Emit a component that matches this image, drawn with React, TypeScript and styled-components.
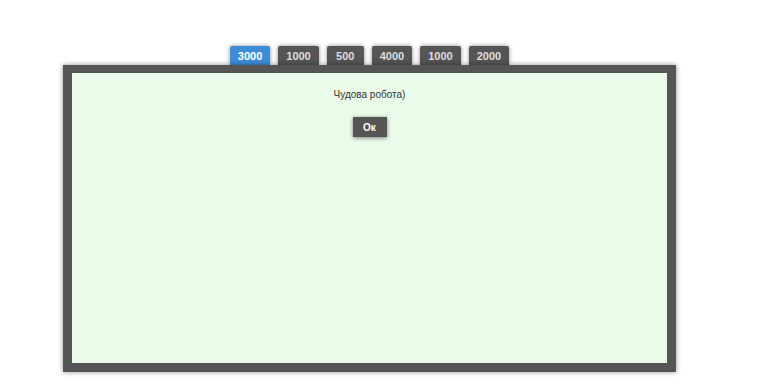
import React, { useState } from 'react';
import styled, { createGlobalStyle } from 'styled-components';

const GlobalStyle = createGlobalStyle`
  html, body {
    margin: 0;
    padding: 0;
    background: #fff;
    font-family: "Liberation Sans", Arial, sans-serif;
  }
`

const Page = styled.div`
  width: 768px;
  height: 383px;
  padding-top: 46px;
  box-sizing: border-box;
`

const Board = styled.div`
  width: 613px;
  margin-left: 63px;
  display: flex;
  flex-direction: column;
  align-items: center;
`

const TabRow = styled.div`
  display: flex;
  gap: 8px;
  position: relative;
  z-index: 0;
`

const Tab = styled.button<{ active: boolean }>`
  height: 19px;
  padding: 0 8px;
  min-width: 37px;
  border: none;
  border-radius: 2px 2px 0 0;
  font: bold 11px "Liberation Sans", Arial, sans-serif;
  color: ${props => props.active ? '#fff' : '#dedede'};
  background: ${props => props.active ? '#3d8ed9' : '#555'};
  box-shadow: 0 0 4px rgba(0, 0, 0, 0.45);
  cursor: pointer;
`

const Panel = styled.div`
  position: relative;
  z-index: 1;
  width: 613px;
  height: 307px;
  box-sizing: border-box;
  border: 9px solid #555;
  border-top-width: 8px;
  background: #ebfbe9;
  box-shadow: 0 0 5px rgba(0, 0, 0, 0.45);
  display: flex;
  flex-direction: column;
  align-items: center;
  padding-top: 15px;
`

const Message = styled.p`
  margin: 0;
  font: 10px/13px "Liberation Sans", Arial, sans-serif;
  color: #333;
`

const OkButton = styled.button`
  margin-top: 16px;
  width: 34px;
  height: 20px;
  padding: 0;
  border: none;
  background: #555;
  color: #fff;
  font: bold 10px "Liberation Sans", Arial, sans-serif;
  box-shadow: 0 1px 4px rgba(0, 0, 0, 0.5);
  cursor: pointer;
`

const amounts = [3000, 1000, 500, 4000, 1000, 2000];

export default function App() {
  const [active, setActive] = useState(0);

  return (
    <Page>
      <GlobalStyle />
      <Board>
        <TabRow>
          {amounts.map((a, i) => (
            <Tab key={i} active={i === active} onClick={() => setActive(i)}>{a}</Tab>
          ))}
        </TabRow>
        <Panel>
          <Message>Чудова робота)</Message>
          <OkButton>Ок</OkButton>
        </Panel>
      </Board>
    </Page>
  )
}
